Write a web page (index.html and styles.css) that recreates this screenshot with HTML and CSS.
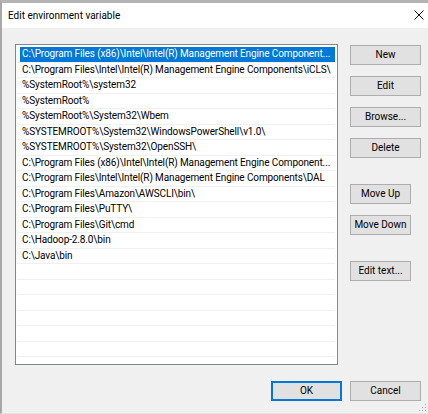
FILE: index.html
```html
<!DOCTYPE html>
<html>
<head>
<meta charset="utf-8">
<link rel="stylesheet" href="styles.css">
</head>
<body>
<div class="frame">
  <div class="titlebar">
    <span class="title">Edit environment variable</span>
    <svg class="close" width="10" height="10" viewBox="0 0 10 10"><path d="M0.5 0.5 L9.5 9.5 M9.5 0.5 L0.5 9.5" stroke="#111" stroke-width="1" fill="none"/></svg>
  </div>
  <div class="content">
    <div class="main">
      <div class="listbox">
        <div class="row sel"><span class="txt">C:\Program Files (x86)\Intel\Intel(R) Management Engine Component...</span></div>
        <div class="row"><span class="txt">C:\Program Files\Intel\Intel(R) Management Engine Components\iCLS\</span></div>
        <div class="row"><span class="txt">%SystemRoot%\system32</span></div>
        <div class="row"><span class="txt">%SystemRoot%</span></div>
        <div class="row"><span class="txt">%SystemRoot%\System32\Wbem</span></div>
        <div class="row"><span class="txt">%SYSTEMROOT%\System32\WindowsPowerShell\v1.0\</span></div>
        <div class="row"><span class="txt">%SYSTEMROOT%\System32\OpenSSH\</span></div>
        <div class="row"><span class="txt">C:\Program Files (x86)\Intel\Intel(R) Management Engine Component...</span></div>
        <div class="row"><span class="txt">C:\Program Files\Intel\Intel(R) Management Engine Components\DAL</span></div>
        <div class="row"><span class="txt">C:\Program Files\Amazon\AWSCLI\bin\</span></div>
        <div class="row"><span class="txt">C:\Program Files\PuTTY\</span></div>
        <div class="row"><span class="txt">C:\Program Files\Git\cmd</span></div>
        <div class="row"><span class="txt">C:\Hadoop-2.8.0\bin</span></div>
        <div class="row"><span class="txt">C:\Java\bin</span></div>
        <div class="row"><span class="txt"></span></div>
        <div class="row"><span class="txt"></span></div>
        <div class="row"><span class="txt"></span></div>
        <div class="row"><span class="txt"></span></div>
        <div class="row"><span class="txt"></span></div>
        <div class="row"><span class="txt"></span></div>
        <div class="row"><span class="txt"></span></div>
      </div>
      <div class="side">
        <button class="btn">New</button>
        <button class="btn">Edit</button>
        <button class="btn">Browse...</button>
        <button class="btn">Delete</button>
        <button class="btn narrow gap-big">Move Up</button>
        <button class="btn narrow">Move Down</button>
        <button class="btn narrow gap-big">Edit text...</button>
      </div>
    </div>
    <div class="footer">
      <button class="btn default">OK</button>
      <button class="btn">Cancel</button>
    </div>
  </div>
  <svg class="grip" width="8" height="8" viewBox="0 0 8 8">
    <rect x="6" y="0" width="1" height="1" fill="#a0a0a0"/>
    <rect x="3" y="3" width="1" height="1" fill="#a0a0a0"/>
    <rect x="6" y="3" width="1" height="1" fill="#a0a0a0"/>
    <rect x="0" y="6" width="1" height="1" fill="#a0a0a0"/>
    <rect x="3" y="6" width="1" height="1" fill="#a0a0a0"/>
    <rect x="6" y="6" width="1" height="1" fill="#a0a0a0"/>
  </svg>
</div>
</body>
</html>
```
FILE: styles.css
```css
html, body {
  margin: 0;
  padding: 0;
}
body {
  width: 428px;
  height: 414px;
  overflow: hidden;
  background: #f0f0f0;
  font-family: Roboto, "Noto Sans", sans-serif;
  font-size: 10px;
  color: #000;
}
.frame {
  position: relative;
  box-sizing: border-box;
  width: 428px;
  height: 414px;
  border-top: 3px solid #b4b4b4;
  border-left: 2px solid #a8a8a8;
  border-bottom: 1px solid #e4e4e4;
  display: flex;
  flex-direction: column;
}
.titlebar {
  height: 25px;
  background: #fff;
  display: flex;
  align-items: center;
  justify-content: space-between;
  padding: 0 4px 0 6px;
}
.title {
  font-size: 10px;
  line-height: 12px;
  padding-top: 1px;
}
.close {
  display: block;
  margin-bottom: 1px;
}
.content {
  flex: 1;
  display: flex;
  flex-direction: column;
  padding: 16px 7px 0 13px;
}
.main {
  display: flex;
  gap: 12px;
}
.listbox {
  box-sizing: border-box;
  width: 323px;
  height: 321px;
  background: #fff;
  border: 1px solid #828790;
  padding: 2px 1px 0 1px;
  overflow: hidden;
}
.row {
  box-sizing: border-box;
  height: 15.5px;
  border-bottom: 1px solid #f0f0f0;
  display: flex;
  margin-right: 1px;
}
.txt {
  flex: 1;
  margin-left: 3px;
  padding-left: 2px;
  font-size: 10px;
  letter-spacing: -0.12px;
  line-height: 14.5px;
  white-space: nowrap;
  overflow: hidden;
}
.row.sel .txt {
  background: #0078d7;
  color: #fff;
}
.side {
  display: flex;
  flex-direction: column;
  align-items: flex-start;
  gap: 11px;
  padding-top: 1px;
}
.btn {
  box-sizing: border-box;
  width: 71px;
  height: 20px;
  margin: 0;
  padding: 0;
  background: #e1e1e1;
  border: 1px solid #adadad;
  font-family: inherit;
  font-size: 10px;
  color: #000;
  line-height: 16px;
  white-space: nowrap;
}
.btn.narrow {
  width: 61px;
}
.gap-big {
  margin-top: 15px;
}
.btn.default {
  border: 2px solid #0078d7;
}
.footer {
  display: flex;
  justify-content: flex-end;
  gap: 8px;
  margin-top: 16px;
}
.grip {
  position: absolute;
  right: 1px;
  bottom: 1px;
}
```
